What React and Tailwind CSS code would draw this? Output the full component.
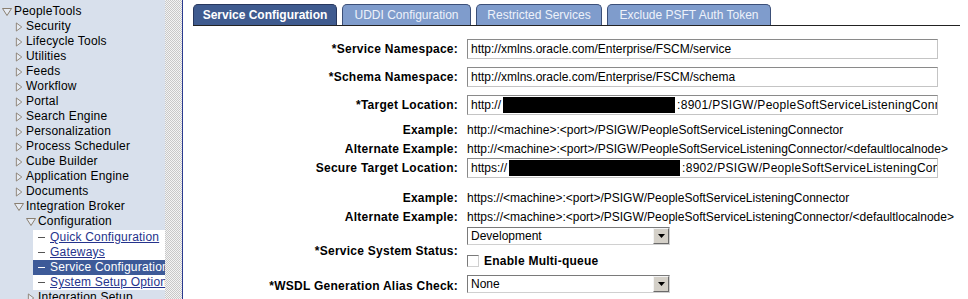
import React from "react";

const navItems = [
  { label: "PeopleTools", level: 0, open: true },
  { label: "Security", level: 1 },
  { label: "Lifecycle Tools", level: 1 },
  { label: "Utilities", level: 1 },
  { label: "Feeds", level: 1 },
  { label: "Workflow", level: 1 },
  { label: "Portal", level: 1 },
  { label: "Search Engine", level: 1 },
  { label: "Personalization", level: 1 },
  { label: "Process Scheduler", level: 1 },
  { label: "Cube Builder", level: 1 },
  { label: "Application Engine", level: 1 },
  { label: "Documents", level: 1 },
  { label: "Integration Broker", level: 1, open: true },
  { label: "Configuration", level: 2, open: true },
];

const leaves = [
  { label: "Quick Configuration" },
  { label: "Gateways" },
  { label: "Service Configuration", selected: true },
  { label: "System Setup Option" },
];

const indents = ["pl-[2px]", "pl-[14px]", "pl-[26px]"];

function Arrow({ open }) {
  return (
    <span className="flex h-[15px] w-[10px] shrink-0 items-center">
      {open ? (
        <svg width="10" height="8" viewBox="0 0 10 8">
          <polygon points="0.5,0.5 9.5,0.5 5,7.5" fill="#e6ebf3" stroke="#8a7f70" strokeWidth="1" />
        </svg>
      ) : (
        <svg width="10" height="10" viewBox="0 0 10 10" className="ml-[1px]">
          <polygon points="1.5,0.5 7.5,5 1.5,9.5" fill="#e6ebf3" stroke="#8a7f70" strokeWidth="1" />
        </svg>
      )}
    </span>
  );
}

function NavRow({ item }) {
  return (
    <div className={`flex h-[15px] items-center gap-[2px] leading-[15px] ${indents[item.level]}`}>
      <Arrow open={item.open} />
      <span className="whitespace-nowrap">{item.label}</span>
    </div>
  );
}

function Sidebar() {
  return (
    <div className="flex h-full shrink-0">
      <div className="w-[165px] overflow-hidden bg-[#d8e0ec] pt-[4px] text-[12px] tracking-[0.2px] text-black">
        {navItems.map((it) => (
          <NavRow key={it.label} item={it} />
        ))}
        <div className="ml-[33px] mt-[1px] bg-white">
          {leaves.map((l) => (
            <div
              key={l.label}
              className={`flex h-[15px] items-center pl-[5px] leading-[15px] whitespace-nowrap ${
                l.selected ? "bg-[#3d5a98] text-white" : "text-[#25338c]"
              }`}
            >
              <span className={`mr-[5px] inline-block h-[1px] w-[7px] shrink-0 ${l.selected ? "bg-white" : "bg-[#555]"}`} />
              <span className={l.selected ? "" : "underline"}>{l.label}</span>
            </div>
          ))}
        </div>
        <NavRow item={{ label: "Integration Setup", level: 2 }} />
      </div>
      <div className="w-[17px] bg-[repeating-conic-gradient(#c8c8c8_0_25%,#f4f4f4_0_50%)] bg-[length:2px_2px]" />
      <div className="w-[1px] bg-[#2b3a8f]" />
    </div>
  );
}

function Tab({ label, active, w }) {
  return (
    <div
      className={`flex h-[21px] items-center justify-center rounded-t-[5px] border border-b-0 text-[12px] whitespace-nowrap ${w} ${
        active
          ? "border-[#27375e] bg-[#3f5b8f] font-bold text-white"
          : "border-[#3b4f78] bg-[#7f9ccc] text-[#eef2fa]"
      }`}
    >
      {label}
    </div>
  );
}

function Label({ children, className = "" }) {
  return (
    <div className={`w-[284px] shrink-0 pr-[9px] text-right text-[12px] font-bold tracking-[0.25px] whitespace-nowrap ${className}`}>
      {children}
    </div>
  );
}

function TextBox({ children }) {
  return (
    <div className="flex h-[20px] w-[471px] items-center overflow-hidden border border-[#c4c4c4] border-t-[#8a8a8a] border-l-[#8a8a8a] bg-white pl-[3px] text-[12px] whitespace-nowrap">
      {children}
    </div>
  );
}

function Redacted({ w }) {
  return <span className={`mx-[2px] inline-block h-[16px] shrink-0 bg-black ${w}`} />;
}

function Select({ value }) {
  return (
    <div className="flex h-[18px] w-[203px] border border-[#d0d0d0] border-t-[#7a7a7a] border-l-[#7a7a7a] bg-white">
      <div className="flex-1 pl-[3px] text-[12px] leading-[16px]">{value}</div>
      <div className="flex w-[16px] items-center justify-center border border-[#f4f4f4] border-r-[#6a6a6a] border-b-[#6a6a6a] bg-[#d4d0c8]">
        <svg width="7" height="4" viewBox="0 0 7 4">
          <polygon points="0,0 7,0 3.5,4" fill="#000" />
        </svg>
      </div>
    </div>
  );
}

function Row({ label, children, h = "h-[20px]", className = "" }) {
  return (
    <div className={`flex items-center ${h} ${className}`}>
      <Label>{label}</Label>
      <div className="text-[12px] whitespace-nowrap">{children}</div>
    </div>
  );
}

export default function App() {
  return (
    <div className="flex h-[299px] w-[968px] overflow-hidden bg-white font-['Liberation_Sans',Arial,sans-serif] text-black">
      <Sidebar />
      <div className="flex-1">
        <div className="ml-[10px] mr-[8px] mt-[4px] flex gap-[5px] border-b border-[#222]">
          <Tab label="Service Configuration" active w="w-[144px]" />
          <Tab label="UDDI Configuration" w="w-[129px]" />
          <Tab label="Restricted Services" w="w-[126px]" />
          <Tab label="Exclude PSFT Auth Token" w="w-[164px]" />
        </div>

        <Row label="*Service Namespace:" className="mt-[13px]">
          <TextBox>http://xmlns.oracle.com/Enterprise/FSCM/service</TextBox>
        </Row>
        <Row label="*Schema Namespace:" className="mt-[8px]">
          <TextBox>http://xmlns.oracle.com/Enterprise/FSCM/schema</TextBox>
        </Row>
        <Row label="*Target Location:" className="mt-[8px]">
          <TextBox>
            <span className="shrink-0">http://</span>
            <Redacted w="w-[172px]" />
            <span className="shrink-0 tracking-[0.3px]">:8901/PSIGW/PeopleSoftServiceListeningConnector</span>
          </TextBox>
        </Row>
        <Row label="Example:" h="h-[19px]" className="mt-[5px]">
          http://&lt;machine&gt;:&lt;port&gt;/PSIGW/PeopleSoftServiceListeningConnector
        </Row>
        <Row label="Alternate Example:" h="h-[19px]">
          http://&lt;machine&gt;:&lt;port&gt;/PSIGW/PeopleSoftServiceListeningConnector/&lt;defaultlocalnode&gt;
        </Row>
        <Row label="Secure Target Location:">
          <TextBox>
            <span className="shrink-0">https://</span>
            <Redacted w="w-[171px]" />
            <span className="shrink-0 tracking-[0.3px]">:8902/PSIGW/PeopleSoftServiceListeningConnector</span>
          </TextBox>
        </Row>
        <Row label="Example:" h="h-[19px]" className="mt-[10px]">
          https://&lt;machine&gt;:&lt;port&gt;/PSIGW/PeopleSoftServiceListeningConnector
        </Row>
        <Row label="Alternate Example:" h="h-[19px]">
          https://&lt;machine&gt;:&lt;port&gt;/PSIGW/PeopleSoftServiceListeningConnector/&lt;defaultlocalnode&gt;
        </Row>

        <div className="mt-[1px] flex items-center">
          <Label className="pt-[6px]">*Service System Status:</Label>
          <div>
            <Select value="Development" />
            <div className="mt-[9px] flex h-[14px] items-center">
              <span className="inline-block h-[12px] w-[12px] border border-[#d0d0d0] border-t-[#7a7a7a] border-l-[#7a7a7a] bg-white" />
              <span className="ml-[5px] text-[12px] font-bold tracking-[0.25px]">Enable Multi-queue</span>
            </div>
          </div>
        </div>

        <div className="mt-[7px] flex h-[18px] items-center">
          <Label className="pt-[4px]">*WSDL Generation Alias Check:</Label>
          <Select value="None" />
        </div>
      </div>
    </div>
  );
}
